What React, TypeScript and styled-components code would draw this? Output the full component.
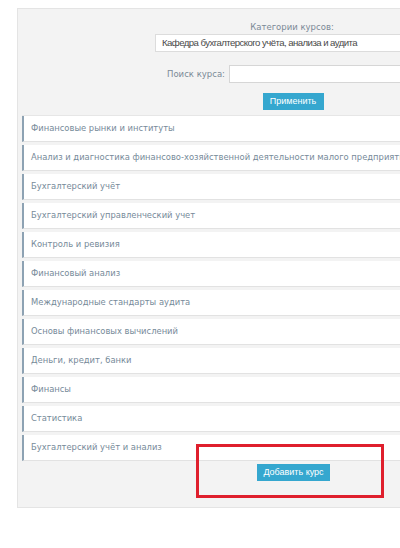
import { createGlobalStyle, styled } from 'styled-components';

const GlobalStyle = createGlobalStyle`
  html, body {
    margin: 0;
    padding: 0;
    background: #fff;
    overflow: hidden;
  }
  body {
    font-family: "DejaVu Sans", Verdana, sans-serif;
  }
`;

const Page = styled.div`
  width: 400px;
  height: 548px;
  overflow: hidden;
  padding: 8px 0 0 17px;
  box-sizing: border-box;
`;

const Panel = styled.div`
  width: 546px;
  background: #f3f3f3;
  border: 1px solid #e4e4e4;
  box-sizing: border-box;
  padding: 6px 0 10px 4px;
`;

const Filters = styled.div`
  display: flex;
  flex-direction: column;
  align-items: center;
`;

const Caption = styled.div`
  font-size: 8.5px;
  color: #7b8a97;
  line-height: 12px;
  margin-top: 6px;
`;

const Select = styled.div`
  width: 270px;
  height: 18px;
  margin-top: 1px;
  margin-right: 4px;
  background: #fff;
  border: 1px solid #dcdcdc;
  box-sizing: border-box;
  padding-left: 6px;
  font-family: "Liberation Sans", Arial, sans-serif;
  font-size: 9.6px;
  letter-spacing: -0.55px;
  line-height: 16px;
  color: #4a4a4a;
  white-space: nowrap;
  overflow: hidden;
`;

const SearchRow = styled.div`
  display: flex;
  align-items: center;
  gap: 4px;
  margin-top: 13px;
  margin-left: 12px;
`;

const SearchLabel = styled.label`
  font-size: 8.5px;
  color: #7b8a97;
`;

const SearchInput = styled.div`
  width: 200px;
  height: 18px;
  background: #fff;
  border: 1px solid #d6d6d6;
  box-sizing: border-box;
`;

const Button = styled.button<{ $w: number }>`
  border: none;
  background: #35a7cf;
  color: #fff;
  font-family: "Liberation Sans", Arial, sans-serif;
  font-size: 9px;
  height: 17px;
  width: ${(p) => p.$w}px;
  padding: 0;
  cursor: pointer;
`;

const ApplyWrap = styled.div`
  margin-top: 6px;
  margin-left: 2px;
`;

const List = styled.div`
  margin-top: 5px;
  border-top: 1px solid #e6e6e6;
  display: flex;
  flex-direction: column;
  gap: 3px;
  margin-right: 6px;
`;

const Row = styled.div`
  height: 26px;
  background: #fff;
  border-left: 2px solid #8da2b3;
  border-bottom: 1px solid #e2e2e2;
  box-sizing: border-box;
  padding-left: 7px;
  display: flex;
  align-items: center;
  font-size: 8.4px;
  color: #768a99;
  white-space: nowrap;
  overflow: hidden;
`;

const Footer = styled.div`
  position: relative;
  display: flex;
  justify-content: center;
  padding-top: 3px;
  height: 33px;
  margin-left: 3px;
`;

const Highlight = styled.div`
  position: absolute;
  left: 171px;
  top: -17px;
  width: 188px;
  height: 54px;
  border: 3px solid #df1f2d;
  box-sizing: border-box;
  pointer-events: none;
`;

const courses = [
  'Финансовые рынки и институты',
  'Анализ и диагностика финансово-хозяйственной деятельности малого предприятия',
  'Бухгалтерский учёт',
  'Бухгалтерский управленческий учет',
  'Контроль и ревизия',
  'Финансовый анализ',
  'Международные стандарты аудита',
  'Основы финансовых вычислений',
  'Деньги, кредит, банки',
  'Финансы',
  'Статистика',
  'Бухгалтерский учёт и анализ',
];

const App = () => {
  return (
    <Page>
      <GlobalStyle />
      <Panel>
        <Filters>
          <Caption>Категории курсов:</Caption>
          <Select>Кафедра бухгалтерского учёта, анализа и аудита</Select>
          <SearchRow>
            <SearchLabel>Поиск курса:</SearchLabel>
            <SearchInput />
          </SearchRow>
          <ApplyWrap>
            <Button $w={61}>Применить</Button>
          </ApplyWrap>
        </Filters>
        <List>
          {courses.map((c) => (
            <Row key={c}>{c}</Row>
          ))}
        </List>
        <Footer>
          <Button $w={73}>Добавить курс</Button>
          <Highlight />
        </Footer>
      </Panel>
    </Page>
  );
};

export default App;
